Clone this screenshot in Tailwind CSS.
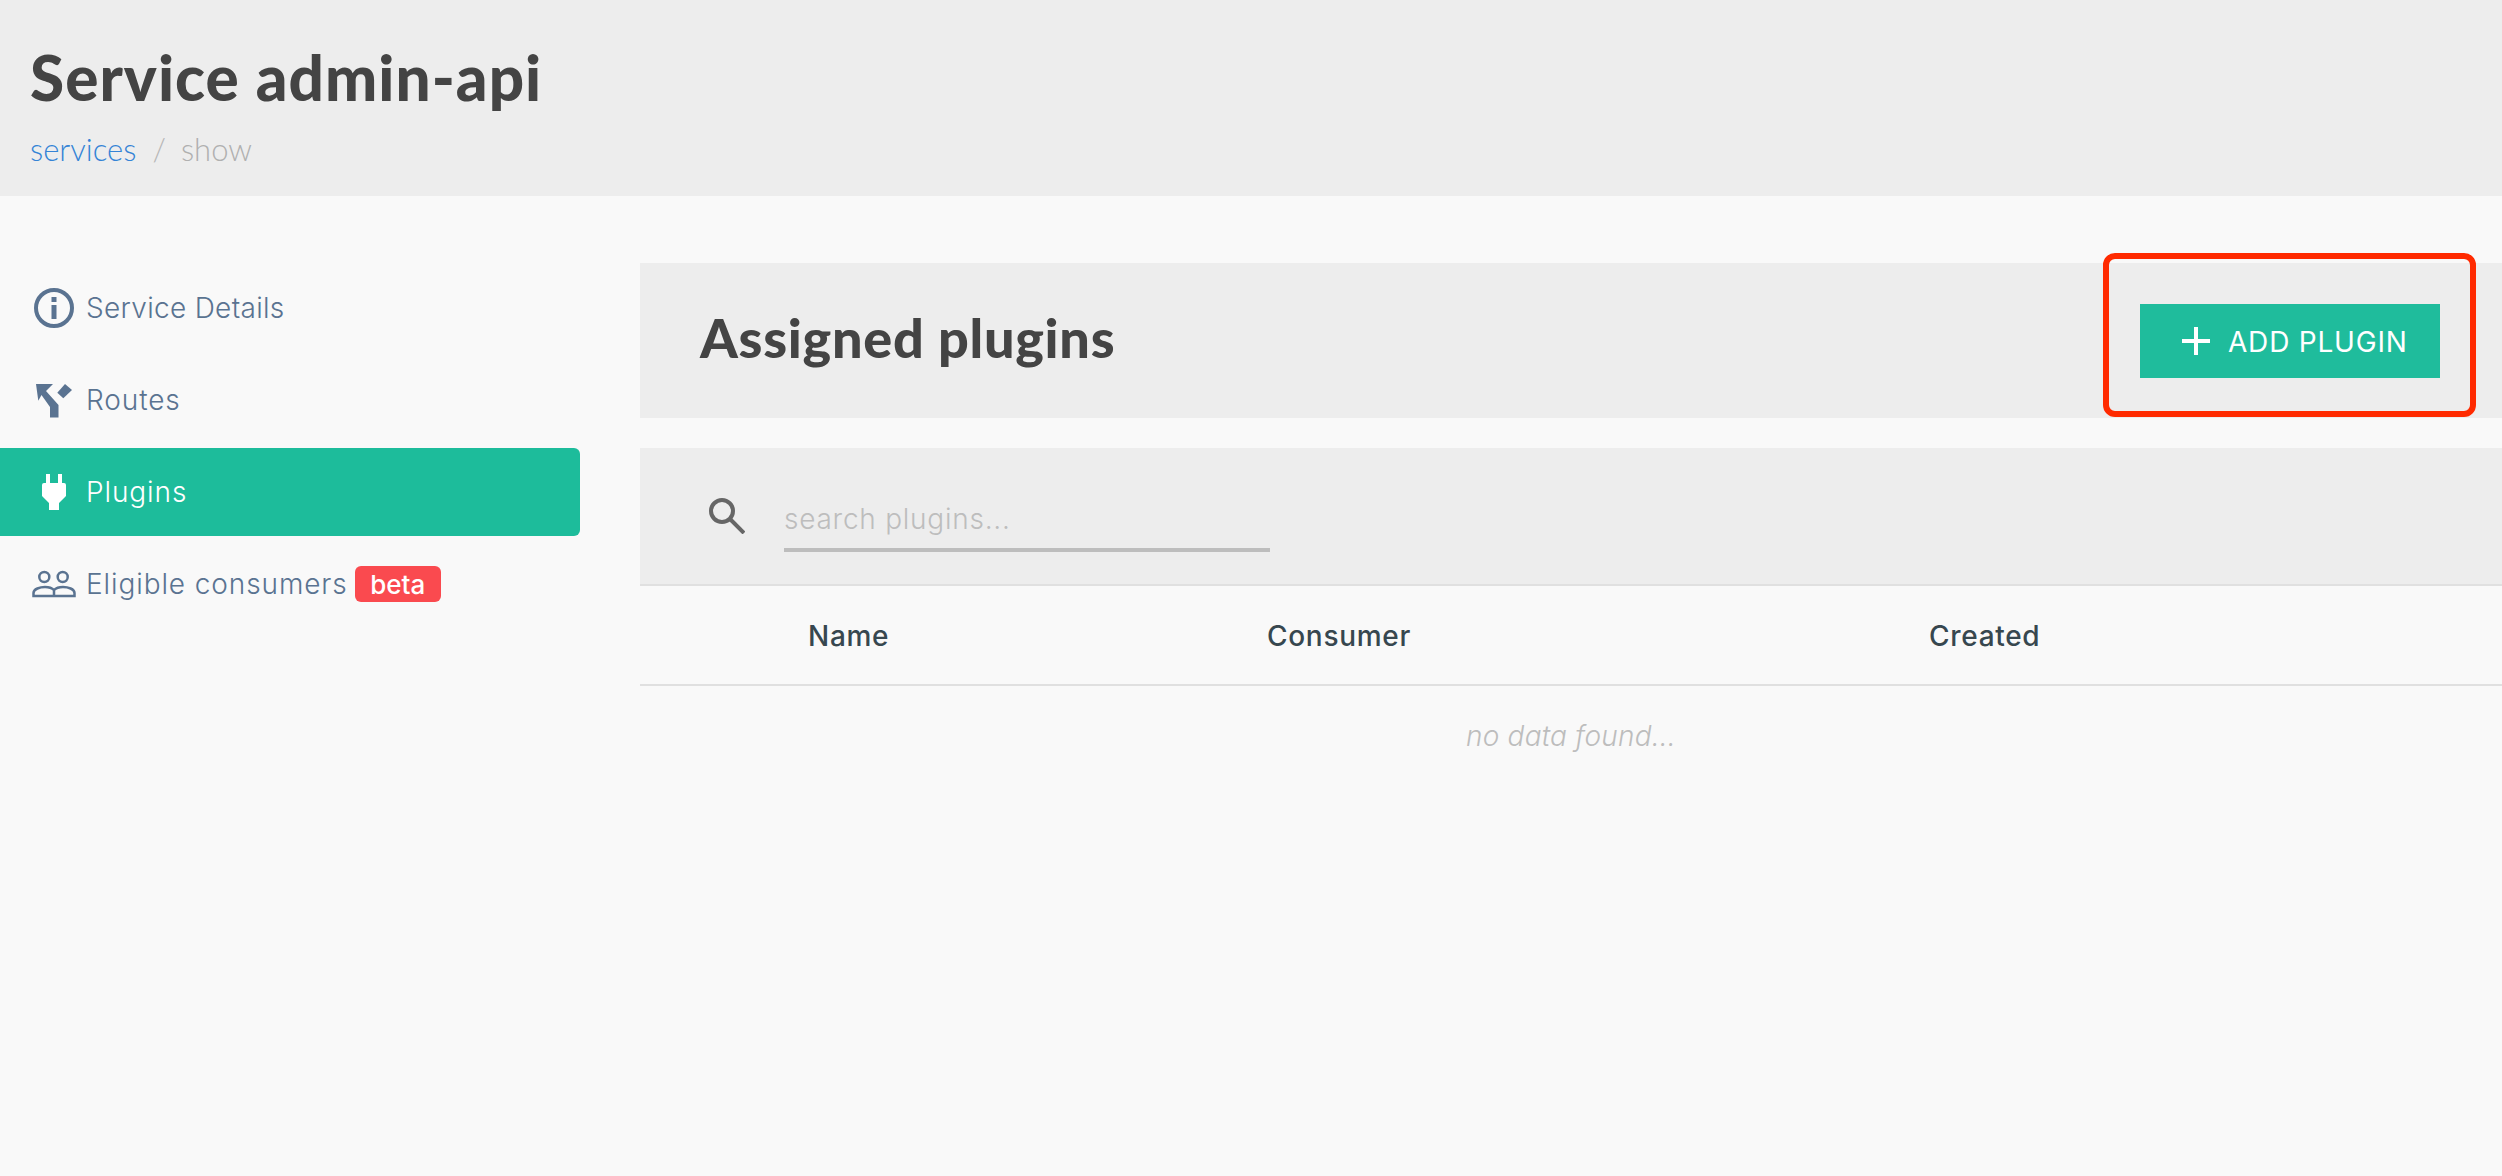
<!DOCTYPE html>
<html lang="en">
<head>
  <meta charset="UTF-8">
  <title>Service admin-api</title>
  <script src="https://cdn.jsdelivr.net/npm/@tailwindcss/browser@4"></script>
</head>
<body class="bg-[#f9f9f9] font-[Inter,sans-serif] min-h-screen overflow-hidden">
  <!-- page header -->
  <header class="h-[196px] bg-[#ededed] pl-[30px] pt-[41px] font-[Lato,sans-serif]">
    <h1 class="text-[62px] leading-[72px] font-black tracking-[1.05px] text-[#444444]">Service admin-api</h1>
    <div class="flex items-center mt-[18px] text-[31px] leading-[36px] font-light">
      <a class="text-[#3584d6]">services</a>
      <span class="ml-[16px] text-[#b8b8b8]">/</span>
      <span class="ml-[15px] text-[#b0b0b0]">show</span>
    </div>
  </header>

  <div class="flex">
    <!-- sidebar -->
    <nav class="w-[580px] flex-none pt-[68px] flex flex-col gap-[4px] text-[28px] font-light tracking-[0.9px] text-[#5a7391]">
      <a class="h-[88px] pl-[34px] flex items-center tracking-[0.3px]">
        <span class="w-[52px] flex-none">
          <svg width="40" height="40" viewBox="0 0 40 40" fill="none"><circle cx="20" cy="20" r="18" stroke="#5a7391" stroke-width="4"/><rect x="17.5" y="9" width="5" height="5" fill="#5a7391"/><rect x="17.5" y="17" width="5" height="14" fill="#5a7391"/></svg>
        </span>
        Service Details
      </a>
      <a class="h-[88px] pl-[34px] flex items-center">
        <span class="w-[52px] flex-none">
          <svg width="40" height="40" viewBox="0 0 40 40" fill="#5a7391"><polygon points="2,4 19,4 12,11 24.5,25 24.5,37.5 16,37.5 16,27 7.5,15 4.3,20.7"/><polygon points="31,4 38,10 29.3,18.3 23.3,12.7"/></svg>
        </span>
        Routes
      </a>
      <a class="h-[88px] pl-[34px] flex items-center bg-[#1dbc9b] rounded-r-[6px] text-white">
        <span class="w-[52px] flex-none">
          <svg width="40" height="40" viewBox="0 0 40 40" fill="#ffffff"><rect x="12" y="2" width="4" height="10"/><rect x="24" y="2" width="4" height="10"/><path d="M8 13 Q8 11 10 11 H30 Q32 11 32 13 V24 L25 31 V38 H15 V31 L8 24 Z"/></svg>
        </span>
        Plugins
      </a>
      <a class="h-[88px] pl-[34px] flex items-center">
        <span class="w-[52px] flex-none">
          <svg class="ml-[-2px]" width="44" height="28" viewBox="0 0 44 28" fill="none" stroke="#5a7391" stroke-width="2.5"><circle cx="12.3" cy="7" r="5"/><circle cx="30.7" cy="7" r="5"/><path d="M1.5 26 V23 C1.5 19 8 17 13 17 C17 17 20 18 22 20 C24 18 27 17 31 17 C36 17 42.5 19 42.5 23 V26 Z M22 20 V26"/></svg>
        </span>
        Eligible consumers
        <span class="ml-[7px] h-[36px] w-[86px] rounded-[6px] bg-[#fa4a4f] text-white font-medium tracking-normal text-[26px] flex items-center justify-center">beta</span>
      </a>
    </nav>

    <!-- main -->
    <main class="flex-1 ml-[60px] pt-[67px]">
      <div class="relative h-[155px] bg-[#ededed] flex items-center justify-between pl-[60px] pr-[62px]">
        <h2 class="mb-[6px] text-[54px] font-black tracking-[0.7px] text-[#444444] font-[Lato,sans-serif]">Assigned plugins</h2>
        <button class="w-[300px] h-[74px] pl-[42px] bg-[#1fbc9c] text-white text-[28px] tracking-[0.8px] flex items-center justify-start gap-[18px]">
          <svg width="28" height="28" viewBox="0 0 28 28" stroke="#ffffff" stroke-width="4"><path d="M0 14 H28 M14 0 V28"/></svg>
          <span class="mt-[3px]">ADD PLUGIN</span>
        </button>
        <!-- red annotation box -->
        <div class="absolute left-[1463px] top-[-10px] w-[373px] h-[164px] border-[6px] border-[#ff2a00] rounded-[12px]"></div>
      </div>

      <div class="mt-[30px] h-[138px] bg-[#ededed] border-b-2 border-[#e0e0e0] flex items-center pl-[69px]">
        <svg class="flex-none" width="36" height="36" viewBox="0 0 36 36" fill="none" stroke="#666666" stroke-width="4"><circle cx="13" cy="13" r="11"/><path d="M21 21 L35 35"/></svg>
        <div class="ml-[39px] mt-[6px] w-[486px] h-[66px] pt-[4px] border-b-[4px] border-[#bdbdbd] text-[28px] tracking-[0.75px] font-light text-[#bdbdbd] flex items-center">search plugins...</div>
      </div>

      <div class="h-[100px] pt-[2px] border-b-2 border-[#e0e0e0] grid grid-cols-[459px_662px_1fr] pl-[168px] items-center text-[28px] font-medium tracking-[0.7px] text-[#37474f]">
        <span>Name</span>
        <span>Consumer</span>
        <span>Created</span>
      </div>
      <p class="mt-[29px] w-[1862px] text-center text-[28px] tracking-[0.2px] italic font-light text-[#bdbdbd]">no data found...</p>
    </main>
  </div>
</body>
</html>
